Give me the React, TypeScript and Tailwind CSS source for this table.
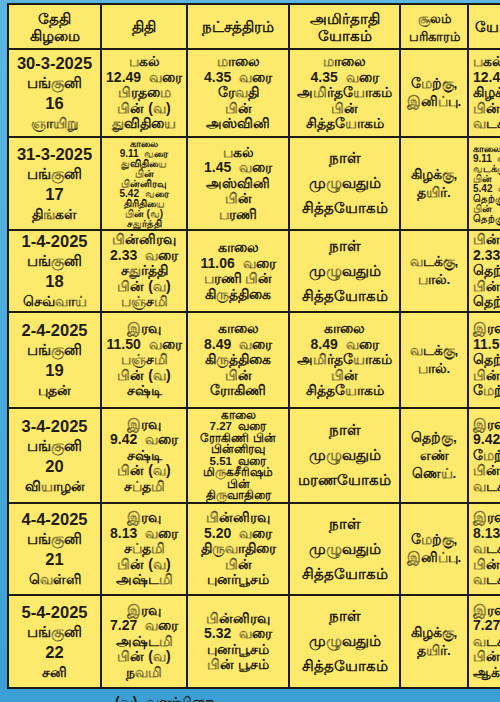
import React from 'react';

type Row = {
  date: string[];
  thithi: string[];
  thithiSmall?: boolean;
  nak: string[];
  nakSmall?: boolean;
  amirtha: string[];
  amirthaWide?: boolean;
  soolam: string[];
  last: string[];
  lastSmall?: boolean;
  h: string;
};

const S = '\u00a0\u00a0';

const rows: Row[] = [
  {
    date: ['30-3-2025', 'பங்குனி', '16', 'ஞாயிறு'],
    thithi: ['பகல்', `12.49${S}வரை`, 'பிரதமை', 'பின் (வ)', 'துவிதியை'],
    nak: ['மாலை', `4.35${S}வரை`, 'ரேவதி', 'பின்', 'அஸ்வினி'],
    amirtha: ['மாலை', `4.35${S}வரை`, 'அமிர்தயோகம்', 'பின்', 'சித்தயோகம்'],
    soolam: ['மேற்கு,', 'இனிப்பு.'],
    last: ['பகல்', `12.49${S}வரை`, 'கிழக்கு', 'பின்', 'வடக்கு'],
    h: 'h-[88px]',
  },
  {
    date: ['31-3-2025', 'பங்குனி', '17', 'திங்கள்'],
    thithi: ['காலை', `9.11${S}வரை`, 'துவிதியை', 'பின்', 'பின்னிரவு', `5.42${S}வரை`, 'திரிதியை', 'பின் (வ)', 'சதுர்த்தி'],
    thithiSmall: true,
    nak: ['பகல்', `1.45${S}வரை`, 'அஸ்வினி', 'பின்', 'பரணி'],
    amirtha: ['நாள்', 'முழுவதும்', 'சித்தயோகம்'],
    amirthaWide: true,
    soolam: ['கிழக்கு,', 'தயிர்.'],
    last: ['காலை', `9.11${S}வரை`, 'வடக்கு', 'பின்', `5.42${S}வரை`, 'தெற்கு', 'பின்', 'தெற்கு'],
    lastSmall: true,
    h: 'h-[93px]',
  },
  {
    date: ['1-4-2025', 'பங்குனி', '18', 'செவ்வாய்'],
    thithi: ['பின்னிரவு', `2.33${S}வரை`, 'சதுர்த்தி', 'பின் (வ)', 'பஞ்சமி'],
    nak: ['காலை', `11.06${S}வரை`, 'பரணி பின்', 'கிருத்திகை'],
    amirtha: ['நாள்', 'முழுவதும்', 'சித்தயோகம்'],
    amirthaWide: true,
    soolam: ['வடக்கு,', 'பால்.'],
    last: ['பின்னிரவு', `2.33${S}வரை`, 'தெற்கு', 'பின்', 'தெற்கு'],
    h: 'h-[81px]',
  },
  {
    date: ['2-4-2025', 'பங்குனி', '19', 'புதன்'],
    thithi: ['இரவு', `11.50${S}வரை`, 'பஞ்சமி', 'பின் (வ)', 'சஷ்டி'],
    nak: ['காலை', `8.49${S}வரை`, 'கிருத்திகை', 'பின்', 'ரோகிணி'],
    amirtha: ['காலை', `8.49${S}வரை`, 'அமிர்தயோகம்', 'பின்', 'சித்தயோகம்'],
    soolam: ['வடக்கு,', 'பால்.'],
    last: ['இரவு', `11.50${S}வரை`, 'தெற்கு', 'பின்', 'மேற்கு'],
    h: 'h-[96px]',
  },
  {
    date: ['3-4-2025', 'பங்குனி', '20', 'வியாழன்'],
    thithi: ['இரவு', `9.42${S}வரை`, 'சஷ்டி', 'பின் (வ)', 'சப்தமி'],
    nak: ['காலை', `7.27${S}வரை`, 'ரோகிணி பின்', 'பின்னிரவு', `5.51${S}வரை`, 'மிருகசீரிஷம்', 'பின்', 'திருவாதிரை'],
    nakSmall: true,
    amirtha: ['நாள்', 'முழுவதும்', 'மரணயோகம்'],
    amirthaWide: true,
    soolam: ['தெற்கு,', 'எண்', 'ணெய்.'],
    last: ['இரவு', `9.42${S}வரை`, 'மேற்கு', 'பின்', 'வடக்கு'],
    h: 'h-[95px]',
  },
  {
    date: ['4-4-2025', 'பங்குனி', '21', 'வெள்ளி'],
    thithi: ['இரவு', `8.13${S}வரை`, 'சப்தமி', 'பின் (வ)', 'அஷ்டமி'],
    nak: ['பின்னிரவு', `5.20${S}வரை`, 'திருவாதிரை', 'பின்', 'புனர்பூசம்'],
    amirtha: ['நாள்', 'முழுவதும்', 'சித்தயோகம்'],
    amirthaWide: true,
    soolam: ['மேற்கு,', 'இனிப்பு.'],
    last: ['இரவு', `8.13${S}வரை`, 'வடக்கு', 'பின்', 'வடக்கு'],
    h: 'h-[92px]',
  },
  {
    date: ['5-4-2025', 'பங்குனி', '22', 'சனி'],
    thithi: ['இரவு', `7.27${S}வரை`, 'அஷ்டமி', 'பின் (வ)', 'நவமி'],
    nak: ['பின்னிரவு', `5.32${S}வரை`, 'புனர்பூசம்', 'பின் பூசம்'],
    amirtha: ['நாள்', 'முழுவதும்', 'சித்தயோகம்'],
    amirthaWide: true,
    soolam: ['கிழக்கு,', 'தயிர்.'],
    last: ['இரவு', `7.27${S}வரை`, 'வடக்கு', 'பின்', 'ஆக்னேயம்'],
    h: 'h-[93px]',
  },
];

function Lines({ lines, cls }: { lines: string[]; cls: string }) {
  return (
    <div className={cls}>
      {lines.map((l, i) => (
        <div key={i} className="whitespace-nowrap">{l}</div>
      ))}
    </div>
  );
}

const cell = 'border-2 border-[#1c1a12] text-center align-middle p-0 overflow-hidden font-bold';
const normal = 'text-[14px] leading-[15.5px]';
const small = 'text-[10px] leading-[10px]';
const smallNak = 'text-[11.5px] leading-[11.5px]';

export default function App() {
  return (
    <div
      className="w-[500px] h-[702px] overflow-hidden bg-gradient-to-b from-[#5cb6e2] to-[#3b9fd6] pl-[7px] pt-[3px] text-[#1f1c10]"
      style={{ fontFamily: '"Liberation Sans", "Noto Sans", sans-serif' }}
    >
      <table className="table-fixed border-collapse bg-[#fdea6c] w-[553px]">
        <colgroup>
          <col className="w-[93px]" />
          <col className="w-[86px]" />
          <col className="w-[102px]" />
          <col className="w-[111px]" />
          <col className="w-[68px]" />
          <col className="w-[93px]" />
        </colgroup>
        <thead>
          <tr className="h-[45px] text-[15px] leading-[17px]">
            <th className={cell}>தேதி<br />கிழமை</th>
            <th className={cell}>திதி</th>
            <th className={cell}>நட்சத்திரம்</th>
            <th className={cell}>அமிர்தாதி<br />யோகம்</th>
            <th className={cell}><span className="text-[13px]">சூலம்<br />பரிகாரம்</span></th>
            <th className={cell + ' text-left pl-[6px]'}>யோகினி</th>
          </tr>
        </thead>
        <tbody>
          {rows.map((r, i) => (
            <tr key={i} className={r.h}>
              <td className={cell}>
                <div className="text-[16.5px] leading-[20px]">
                  <div>{r.date[0]}</div>
                  <div className="text-[14.5px]">{r.date[1]}</div>
                  <div>{r.date[2]}</div>
                  <div className="text-[14px]">{r.date[3]}</div>
                </div>
              </td>
              <td className={cell}>
                <Lines lines={r.thithi} cls={r.thithiSmall ? small : normal} />
              </td>
              <td className={cell}>
                <Lines lines={r.nak} cls={r.nakSmall ? smallNak : normal} />
              </td>
              <td className={cell}>
                <Lines lines={r.amirtha} cls={r.amirthaWide ? 'text-[14.5px] leading-[25px]' : normal} />
              </td>
              <td className={cell}>
                <Lines lines={r.soolam} cls="text-[13.5px] leading-[18px]" />
              </td>
              <td className={cell + ' text-left pl-[4px]'}>
                <Lines lines={r.last} cls={r.lastSmall ? small : normal} />
              </td>
            </tr>
          ))}
        </tbody>
      </table>
      <div className="pl-[108px] pt-[4px] text-[14px] leading-[18px] font-semibold">(வ)- வளர்பிறை</div>
    </div>
  );
}
